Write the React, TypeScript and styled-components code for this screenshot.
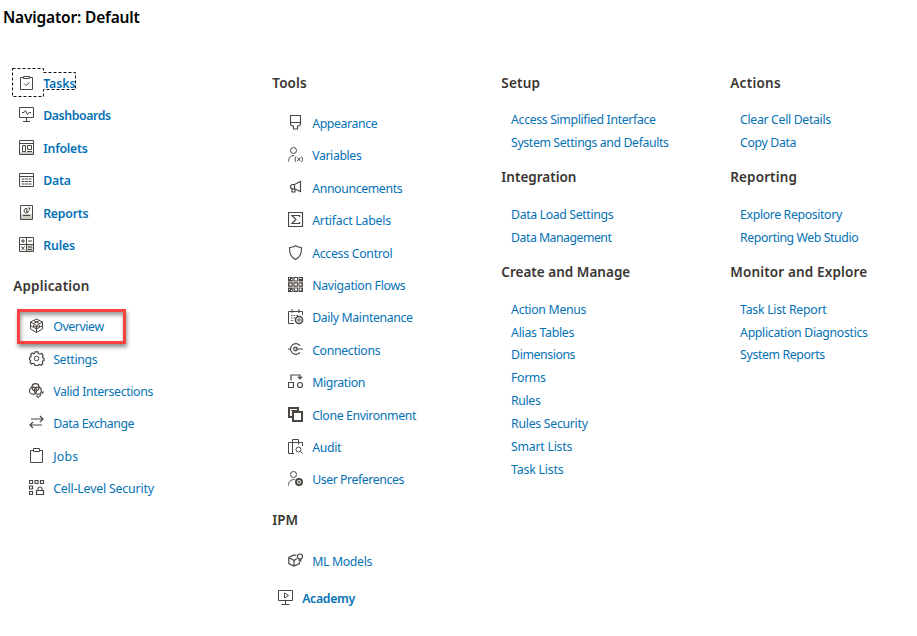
import React from "react";
import styled, { createGlobalStyle, css } from "styled-components";

const GlobalStyle = createGlobalStyle`
  *, *::before, *::after { box-sizing: border-box; }
  body {
    margin: 0;
    background: #fff;
    font-family: "Noto Sans", "Open Sans", sans-serif;
    font-size: 12.3px;
    color: #3a3632;
  }
`;

const Page = styled.div`
  width: 917px;
  height: 636px;
  overflow: hidden;
`;

const Title = styled.h1`
  margin: 0;
  padding: 5px 0 0 3px;
  height: 58px;
  font-size: 15.5px;
  line-height: 24px;
  font-weight: 600;
  letter-spacing: -0.17px;
  color: #000;
`;

const Columns = styled.main`
  display: grid;
  grid-template-columns: 259px 229px 229px 187px;
  padding-left: 13.3px;
`;

const Column = styled.div<{ $top?: number }>`
  padding-top: ${(p) => p.$top ?? 0}px;
`;

const Heading = styled.h2<{ $tracking?: number }>`
  margin: 0;
  padding-top: 0.6px;
  height: 48.9px;
  line-height: 48.9px;
  font-size: 13.5px;
  font-weight: 600;
  letter-spacing: ${(p) => p.$tracking ?? 0}px;
  white-space: nowrap;
`;

const List = styled.ul<{ $gap?: number }>`
  list-style: none;
  margin: ${(p) => p.$gap ?? 0}px 0 0;
  padding: 0;
`;

const IconRow = styled.li<{ $indent: number }>`
  position: relative;
  display: flex;
  align-items: center;
  gap: 8.2px;
  height: 32.4px;
  padding-left: ${(p) => p.$indent}px;
`;

const PlainRow = styled.li`
  display: flex;
  align-items: center;
  height: 22.9px;
  padding: 2px 0 0 9.8px;
`;

const Link = styled.a<{ $strong?: boolean; $tracking?: number }>`
  color: #0572b5;
  text-decoration: none;
  white-space: nowrap;
  padding-top: 2px;
  line-height: 20px;
  letter-spacing: ${(p) => (p.$tracking ?? 0) + 0.11}px;
  ${(p) =>
    p.$strong &&
    css`
      font-weight: 600;
    `}
`;

const Glyph = styled.svg`
  flex: none;
  width: 16px;
  height: 16px;
  fill: none;
  stroke: #4a4642;
  stroke-width: 1;
`;

const Highlight = styled.div`
  position: absolute;
  left: 3.7px;
  top: -1px;
  width: 109px;
  height: 35px;
  border: 3px solid #f9423f;
  box-shadow: 1px 3px 4px rgba(0, 0, 0, 0.45), inset 1px 3px 4px rgba(0, 0, 0, 0.4);
`;

const FocusOutline = styled.svg`
  position: absolute;
  left: -1.3px;
  top: 1px;
  width: 65px;
  height: 30px;
  fill: none;
  stroke: #111;
  stroke-dasharray: 3 2;
`;

const icons: Record<string, React.ReactNode> = {
  tasks: (
    <>
      <path d="M4.500 2.500h-3v12h12v-12h-3M4.500 1.500h6v2h-6z" />
      <path d="M5 8.500l2 2 3.500-3" />
    </>
  ),
  dashboards: (
    <path d="M.5.5h14v10H.5zM7.500 10.500v4M4 14.500h7M3 5.500h2l1.500-2 2 4 1.500-2h2" />
  ),
  infolets: (
    <>
      <path d="M1 12h13v2H1z" fill="#cfccc8" stroke="none" />
      <path d="M.5.5h14v14H.5zM.5 3.500h14M3.500 5.500h3v6h-3zM8.500 5.500h4v4h-4zM8 11.500h5" />
    </>
  ),
  data: (
    <>
      <path d="M.5 1.500h14v13H.5zM.5 4.500h14" />
      <path d="M2.500 7h10M2.500 9.500h10M2.500 12h10" strokeDasharray="3 .6" />
    </>
  ),
  reports: (
    <>
      <path d="M2 9h11v5H2z" fill="#cfccc8" stroke="none" />
      <path d="M1.500.5h12v14h-12zM4 10.500h7M8 3.500a2.300 2.300 0 1 0 1.500 3H7.500zM9 3h2l-1 2.500" />
    </>
  ),
  rules: (
    <>
      <path d="M8 8h6v6H8z" fill="#cfccc8" stroke="none" />
      <path d="M.5.5h14v14H.5zM7.500.5v14M.5 7.500h14M2 4h4M4 2v4M9 4h4M2.500 9.500l3 3.500M5.500 9.500l-3 3.500M9 10h4M9 12.500h4" />
    </>
  ),
  overview: (
    <>
      <path d="M7.500 1l6 3v7l-6 3.500-6-3.500V4zM1.500 4l6 3.500L13.500 4M7.500 7.500v7" />
      <path d="M4.500 2.500l6 3M10.500 2.500l-6 3M4.500 9v-1.500l3 2M10.500 9V7.500l-3 2M1.500 7.500l6 3.500 6-3.500" />
    </>
  ),
  settings: (
    <>
      <path
        d="M6 .8h3l.4 1.700 1.700.7 1.500-.9 1.500 2-.6 1.500.6 1.200 1 .5v2l-1.300.4-.5 1.300.5 1.500-1.800 1.500-1.400-.8-1.500.6L9 14.500H6l-.5-1.500-1.600-.7-1.400.8-1.500-1.900.6-1.500L.5 8.500v-2l1.400-.7.4-1.300-.6-1.200 1.600-1.400 1.500.8 1-.5z"
        strokeWidth="1.200"
      />
      <circle cx="7.500" cy="7.500" r="2.300" />
    </>
  ),
  intersections: (
    <g strokeWidth="1.200">
      <circle cx="6.500" cy="4.200" r="3.500" />
      <circle cx="4" cy="7.700" r="3.500" />
      <circle cx="8.800" cy="7.700" r="3.500" />
      <path d="M7.500 12.500l2 2 5-6" strokeDasharray="3 1" />
    </g>
  ),
  exchange: <path d="M2 4h12M11 1l3 3-3 3M13 10H1M4 7l-3 3 3 3" strokeWidth="1.200" />,
  jobs: <path d="M4.500 2.500h-3v12h12v-12h-3M4.500.500h6v3h-6z" />,
  security: (
    <path
      d="M.5.5h3v3h-3zM6 .5h3v3H6zM11.500.5h3v3h-3zM.5 6h3v3h-3zM.5 11.500h3v3h-3zM7.500 10.500h7v4h-7zM9 10.500v-1.500a2 2 0 0 1 4 0v1.500"
      strokeWidth="1.200"
    />
  ),
  appearance: <path d="M2.500.5h10v9l-1.500 1.500H9.500v3h-4v-3H4L2.500 9.500zM2.500 7.500h10" strokeWidth="1.100" />,
  variables: (
    <>
      <circle cx="5.500" cy="3.500" r="3" />
      <path d="M.5 14.500c0-3 1.500-6 5.500-6M8 9.500c-1.200 1.500-1.200 4 0 5.500M13.500 9.500c1.300 1.500 1.300 4 0 5.500M9.500 10.500l2.700 3.500M12.500 10.500l-3.200 3.500" />
    </>
  ),
  announcements: (
    <path d="M12.500 1.500v10l-6-2.700H4L2.500 7.500V6L4 4.500h2.500zM6.500 4.500v4.300M4 8.800v3.200h3V9" strokeWidth="1.200" />
  ),
  labels: <path d="M.5.5h14v14H.5zM11.500 5V3.500H4l4 4-4 4h7.500V10" strokeWidth="1.200" />,
  shield: (
    <path
      d="M7.500.8c2 1.500 4 1.700 6 1.700 0 6-1 9.500-6 12-5-2.500-6-6-6-12 2 0 4-.2 6-1.700z"
      strokeWidth="1.100"
    />
  ),
  flows: (
    <>
      <path d="M0 0h15v4.500H0zM0 5.200h15v4.500H0zM0 10.500h15V15H0z" fill="#4a4642" stroke="none" />
      <path
        d="M6.500 1h2.500v2.500H6.500zM11.500 1h2v1h-2zM1.500 6.500h2v2h-2zM6.500 6.500h2.500v2H6.500zM11.500 6.500h2v2h-2zM6.500 11.500h2.500v2H6.500zM11.500 11.500h2v2h-2zM1 1h1v1H1zM3 2h1v1H3zM1 12h1v1H1zM3 13h1v1H3zM4.700 0h.6v15h-.6zM9.900 0h.6v15h-.6z"
        fill="#fff"
        stroke="none"
      />
    </>
  ),
  maintenance: (
    <>
      <path d="M6 14.500H.5v-12h14V6M4 0v4M11 0v4" />
      <path d="M3 6.500h8M3 9h4M3 11.500h3" strokeDasharray="1.500 1.200" />
      <circle cx="11" cy="11" r="3.500" strokeWidth="1.600" />
      <circle cx="11" cy="11" r="1.200" />
    </>
  ),
  connections: (
    <g strokeWidth="1.200">
      <path d="M0 7h2.500M7.500 7H15M12 3.700a5.300 5.300 0 1 0 0 6.600" />
      <circle cx="7.500" cy="7" r="1.800" />
    </g>
  ),
  migration: (
    <g strokeWidth="1.200">
      <path d="M.5 8.500h5v5h-5zM3 6.500V1h9v3.500M9.800 2.700L12 4.900l2.200-2.200" />
      <circle cx="12" cy="11" r="2.500" />
    </g>
  ),
  clone: (
    <>
      <path d="M4 10H1V1h9v3" strokeWidth="2" />
      <path d="M5 5h9v9H5z" strokeWidth="2" />
      <path d="M3.500 4v-.5H9" />
    </>
  ),
  audit: (
    <>
      <path d="M6 14.500H.5v-11h14V7M4.500 14V.5h6v5" />
      <circle cx="10.500" cy="10.500" r="2.500" />
      <path d="M12.300 12.300l2.400 2.400" />
    </>
  ),
  preferences: (
    <>
      <circle cx="5.500" cy="3.500" r="3" />
      <path d="M.5 14.500c0-3 1.500-6 6-6" />
      <circle cx="11" cy="11" r="3" strokeWidth="2" />
      <circle cx="11" cy="11" r=".8" />
    </>
  ),
  models: (
    <g strokeWidth="1.200">
      <path d="M8.500 2.500L6 2 .8 4.500v6L6 13l5.500-2.500V9M.8 4.500L6 7.500l3-2M6 7.500V13" />
      <circle cx="12" cy="3.500" r="2.500" />
      <path d="M11.200 6v2h1.600V6" />
    </g>
  ),
  academy: <path d="M.5.5h14v10H.5zM7.500 10.500v4M3.500 14.500h8M6.500 3v5l4-2.500z" />,
};

type Item = { label: string; icon?: string; tracking?: number; mark?: "focus" | "highlight" };

const mainItems: Item[] = [
  { label: "Tasks", icon: "tasks", mark: "focus", tracking: -0.18 },
  { label: "Dashboards", icon: "dashboards", tracking: -0.5 },
  { label: "Infolets", icon: "infolets", tracking: -0.33 },
  { label: "Data", icon: "data", tracking: -0.35 },
  { label: "Reports", icon: "reports", tracking: -0.33 },
  { label: "Rules", icon: "rules", tracking: -0.25 },
];

const applicationItems: Item[] = [
  { label: "Overview", icon: "overview", mark: "highlight", tracking: -0.5 },
  { label: "Settings", icon: "settings", tracking: -0.43 },
  { label: "Valid Intersections", icon: "intersections", tracking: -0.47 },
  { label: "Data Exchange", icon: "exchange", tracking: -0.5 },
  { label: "Jobs", icon: "jobs", tracking: 0.15 },
  { label: "Cell-Level Security", icon: "security", tracking: -0.28 },
];

const toolItems: Item[] = [
  { label: "Appearance", icon: "appearance", tracking: -0.5 },
  { label: "Variables", icon: "variables", tracking: -0.5 },
  { label: "Announcements", icon: "announcements", tracking: -0.48 },
  { label: "Artifact Labels", icon: "labels", tracking: -0.34 },
  { label: "Access Control", icon: "shield", tracking: -0.4 },
  { label: "Navigation Flows", icon: "flows", tracking: -0.43 },
  { label: "Daily Maintenance", icon: "maintenance", tracking: -0.49 },
  { label: "Connections", icon: "connections", tracking: -0.45 },
  { label: "Migration", icon: "migration", tracking: -0.5 },
  { label: "Clone Environment", icon: "clone", tracking: -0.49 },
  { label: "Audit", icon: "audit", tracking: -0.45 },
  { label: "User Preferences", icon: "preferences", tracking: -0.54 },
];

type Group = { title: string; tracking?: number; items: Item[] };

const setupGroups: Group[] = [
  {
    title: "Setup",
    tracking: 0.2,
    items: [
      { label: "Access Simplified Interface", tracking: -0.47 },
      { label: "System Settings and Defaults", tracking: -0.5 },
    ],
  },
  {
    title: "Integration",
    items: [
      { label: "Data Load Settings", tracking: -0.48 },
      { label: "Data Management", tracking: -0.62 },
    ],
  },
  {
    title: "Create and Manage",
    tracking: 0.02,
    items: [
      { label: "Action Menus", tracking: -0.42 },
      { label: "Alias Tables", tracking: -0.4 },
      { label: "Dimensions", tracking: -0.53 },
      { label: "Forms", tracking: -0.5 },
      { label: "Rules", tracking: -0.5 },
      { label: "Rules Security", tracking: -0.4 },
      { label: "Smart Lists", tracking: -0.36 },
      { label: "Task Lists", tracking: -0.3 },
    ],
  },
];

const actionGroups: Group[] = [
  {
    title: "Actions",
    tracking: 0.25,
    items: [
      { label: "Clear Cell Details", tracking: -0.45 },
      { label: "Copy Data", tracking: -0.47 },
    ],
  },
  {
    title: "Reporting",
    tracking: 0.12,
    items: [
      { label: "Explore Repository", tracking: -0.48 },
      { label: "Reporting Web Studio", tracking: -0.53 },
    ],
  },
  {
    title: "Monitor and Explore",
    tracking: 0.15,
    items: [
      { label: "Task List Report", tracking: -0.38 },
      { label: "Application Diagnostics", tracking: -0.43 },
      { label: "System Reports", tracking: -0.48 },
    ],
  },
];

function IconList({
  items,
  indent,
  strong,
  gap,
}: {
  items: Item[];
  indent: number;
  strong?: boolean;
  gap?: number;
}) {
  return (
    <List $gap={gap}>
      {items.map((item) => (
        <IconRow key={item.label} $indent={indent}>
          <Glyph viewBox="0 0 16 16">{icons[item.icon!]}</Glyph>
          <Link $strong={strong} $tracking={item.tracking}>
            {item.label}
          </Link>
          {item.mark === "highlight" && <Highlight />}
          {item.mark === "focus" && (
            <FocusOutline viewBox="0 0 65 30">
              <path d="M.5.5h31v4h32v17h-32v7H.5z" />
            </FocusOutline>
          )}
        </IconRow>
      ))}
    </List>
  );
}

function PlainGroup({ group }: { group: Group }) {
  return (
    <section>
      <Heading $tracking={group.tracking}>{group.title}</Heading>
      <List>
        {group.items.map((item) => (
          <PlainRow key={item.label}>
            <Link $tracking={item.tracking}>{item.label}</Link>
          </PlainRow>
        ))}
      </List>
    </section>
  );
}

export default function App() {
  return (
    <Page>
      <GlobalStyle />
      <Title>Navigator: Default</Title>
      <Columns>
        <Column $top={8.8}>
          <IconList items={mainItems} indent={5.7} strong />
          <Heading $tracking={0.15}>Application</Heading>
          <IconList items={applicationItems} indent={15.7} />
        </Column>
        <Column>
          <Heading $tracking={0.1}>Tools</Heading>
          <IconList items={toolItems} indent={15.7} />
          <Heading>IPM</Heading>
          <IconList items={[{ label: "ML Models", icon: "models", tracking: -0.45 }]} indent={15.7} />
          <IconList
            items={[{ label: "Academy", icon: "academy", tracking: -0.43 }]}
            indent={5.7}
            gap={5}
            strong
          />
        </Column>
        <Column>
          {setupGroups.map((g) => (
            <PlainGroup key={g.title} group={g} />
          ))}
        </Column>
        <Column>
          {actionGroups.map((g) => (
            <PlainGroup key={g.title} group={g} />
          ))}
        </Column>
      </Columns>
    </Page>
  );
}
